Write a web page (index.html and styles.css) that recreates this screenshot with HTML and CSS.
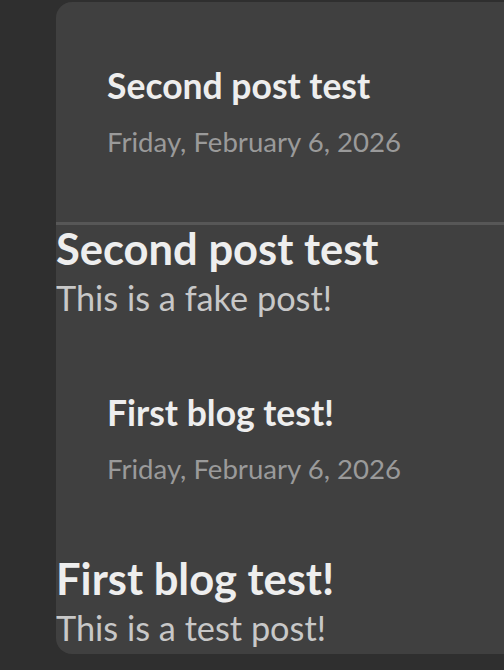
FILE: index.html
```html
<!DOCTYPE html>
<html>
<head>
<meta charset="utf-8">
<link rel="stylesheet" href="styles.css">
</head>
<body>
<main class="panel">
  <article class="post">
    <header class="post-header first">
      <h2 class="post-title">Second post test</h2>
      <time class="post-date">Friday, February 6, 2026</time>
    </header>
    <hr class="divider">
    <div class="post-body">
      <h1 class="body-title">Second post test</h1>
      <p class="body-text">This is a fake post!</p>
    </div>
  </article>
  <article class="post">
    <header class="post-header second">
      <h2 class="post-title">First blog test!</h2>
      <time class="post-date">Friday, February 6, 2026</time>
    </header>
    <div class="post-body">
      <h1 class="body-title">First blog test!</h1>
      <p class="body-text">This is a test post!</p>
    </div>
  </article>
</main>
</body>
</html>
```
FILE: styles.css
```css
html, body {
  margin: 0;
  padding: 0;
  background: #2f2f2f;
  font-family: Lato, "Open Sans", sans-serif;
}
body {
  padding-top: 2px;
  height: 668px;
  overflow: hidden;
}
.panel {
  margin-left: 56px;
  background: #404040;
  border-radius: 16px 0 0 16px;
  height: 652px;
  overflow: hidden;
}
.post-header {
  display: flex;
  flex-direction: column;
  padding-left: 51px;
  box-sizing: border-box;
}
.post-header.first {
  padding-top: 63px;
  height: 220px;
}
.post-header.second {
  padding-top: 67px;
  height: 230px;
}
.post-title {
  margin: 0;
  font-size: 35.5px;
  font-weight: 700;
  color: #eeeeee;
  line-height: 42px;
}
.post-date {
  margin-top: 18px;
  font-size: 27.6px;
  color: #9a9a9a;
  line-height: 33px;
}
.divider {
  margin: 0;
  border: 0;
  height: 3px;
  background: #575757;
}
.post-body {
  display: flex;
  flex-direction: column;
}
.body-title {
  margin: 0;
  font-size: 43.5px;
  font-weight: 700;
  color: #eeeeee;
  line-height: 46px;
}
.body-text {
  margin: 0;
  font-size: 34.3px;
  color: #c8c8c8;
  line-height: 54px;
}
```
